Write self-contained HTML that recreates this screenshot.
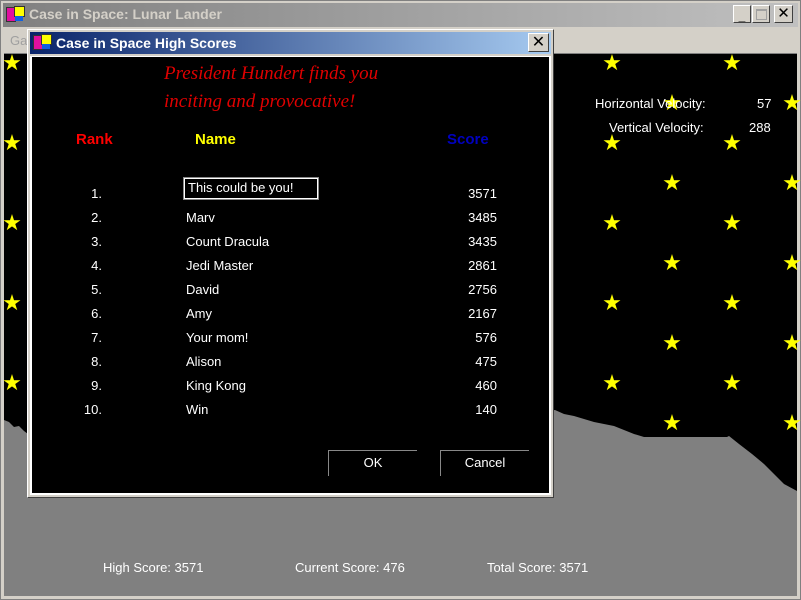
<!DOCTYPE html>
<html><head><style>
body{margin:0;width:801px;height:600px;overflow:hidden;background:#d4d0c8;font-family:"Liberation Sans",sans-serif;position:relative}
.a{position:absolute}
.s{position:absolute;color:#ffff00;font-size:22px;line-height:22px;width:22px;text-align:center}
.t{color:#fff;font-size:13px;position:absolute}
</style></head><body>
<div class="a" style="left:0;top:0;width:801px;height:600px;border:1px solid #808080;box-sizing:border-box;background:#d4d0c8"></div>
<div class="a" style="left:3px;top:3px;width:795px;height:24px;background:linear-gradient(90deg,#808080,#c0c0c0)"></div>
<div class="a" style="left:6px;top:7px;width:8px;height:13px;background:#e0109f;border:1px solid #333"></div>
<div class="a" style="left:14px;top:6px;width:9px;height:9px;background:#ffff00;border:1px solid #333"></div>
<div class="a" style="left:15px;top:16px;width:8px;height:5px;background:#1060e0"></div>
<div class="a" style="left:29px;top:6px;color:#d4d0c8;font-weight:bold;font-size:14px">Case in Space: Lunar Lander</div>
<div class="a" style="left:733px;top:5px;width:18px;height:18px;background:#d4d0c8;border:1px solid #fff;border-right-color:#404040;border-bottom-color:#404040;box-sizing:border-box;font-size:12px;text-align:center;font-weight:bold;line-height:20px">_</div>
<div class="a" style="left:752px;top:5px;width:18px;height:18px;background:#d4d0c8;border:1px solid #fff;border-right-color:#404040;border-bottom-color:#404040;box-sizing:border-box"><div style="margin:3px;width:9px;height:8px;border:1px solid #a0a0a0;border-top-width:2px"></div></div>
<div class="a" style="left:774px;top:5px;width:19px;height:18px;background:#d4d0c8;border:1px solid #fff;border-right-color:#404040;border-bottom-color:#404040;box-sizing:border-box;font-size:15px;text-align:center;line-height:16px">✕</div>
<div class="a" style="left:10px;top:33px;color:#a0a0a0;font-size:13px">Ga</div>
<div class="a" style="left:4px;top:53px;width:793px;height:542px;background:#000;border-top:1px solid #808080;overflow:hidden">
<svg class="a" style="left:0;top:0" width="793" height="542"><polygon fill="#808080" points="0,366 5,368 10,373 15,372 20,377 24,380 300,370 551,356 560,360 570,362 590,368 610,372 630,380 640,383 723,383 725,382 735,390 748,400 760,410 770,420 780,430 793,437 793,542 0,542"/></svg>
</div>
<div id="stars"></div>
<div class="t" style="left:595px;top:96px">Horizontal Velocity:</div>
<div class="t" style="left:757px;top:96px">57</div>
<div class="t" style="left:609px;top:120px">Vertical Velocity:</div>
<div class="t" style="left:749px;top:120px">288</div>
<div class="t" style="left:103px;top:560px">High Score: 3571</div>
<div class="t" style="left:295px;top:560px">Current Score: 476</div>
<div class="t" style="left:487px;top:560px">Total Score: 3571</div>
<div class="a" style="left:27px;top:29px;width:527px;height:469px;background:#d4d0c8;border:1px solid #fff;border-right-color:#404040;border-bottom-color:#404040;box-sizing:border-box"></div>
<div class="a" style="left:30px;top:32px;width:521px;height:22px;background:linear-gradient(90deg,#0a246a,#a6caf0)"></div>
<div class="a" style="left:33px;top:35px;width:8px;height:13px;background:#e0109f;border:1px solid #333"></div>
<div class="a" style="left:41px;top:34px;width:9px;height:9px;background:#ffff00;border:1px solid #333"></div>
<div class="a" style="left:42px;top:44px;width:8px;height:5px;background:#1060e0"></div>
<div class="a" style="left:56px;top:35px;color:#fff;font-weight:bold;font-size:14px">Case in Space High Scores</div>
<div class="a" style="left:528px;top:33px;width:21px;height:19px;background:#d4d0c8;border:1px solid #fff;border-right-color:#404040;border-bottom-color:#404040;box-sizing:border-box;font-size:16px;text-align:center;line-height:17px">✕</div>
<div class="a" style="left:30px;top:56px;width:521px;height:439px;background:#fff"></div>
<div class="a" style="left:32px;top:57px;width:517px;height:436px;background:#000">
<div class="a" style="left:132px;top:3px;color:#e00000;font-family:'Liberation Serif',serif;font-style:italic;font-size:19px;line-height:28px">President Hundert finds you<br>inciting and provocative!</div>
<div class="a" style="left:44px;top:74px;color:#ff0000;font-weight:bold;font-size:15px">Rank</div>
<div class="a" style="left:163px;top:74px;color:#ffff00;font-weight:bold;font-size:15px">Name</div>
<div class="a" style="left:415px;top:74px;color:#0000c0;font-weight:bold;font-size:15px">Score</div>
<div class="a" style="left:152px;top:121px;width:134px;height:21px;border:1px solid #fff;box-sizing:border-box;outline:1px solid #888"></div>
<div id="rows"></div>
<div class="a" style="left:296px;top:393px;width:88px;height:25px;border-top:1px solid #888;border-left:1px solid #888;color:#fff;font-size:13px;text-align:center;line-height:24px">OK</div>
<div class="a" style="left:408px;top:393px;width:88px;height:25px;border-top:1px solid #888;border-left:1px solid #888;color:#fff;font-size:13px;text-align:center;line-height:24px">Cancel</div>
</div>
<script>
var st='';
for(var r=0;r<10;r++){var y=63+r*40;var x0=(r%2==0)?12:72;for(var x=x0;x<801;x+=120){
if(x>20&&x<560&&y<500)continue;
if(y>415&&x<560) continue;
st+='<div class="s" style="left:'+(x-11)+'px;top:'+(y-11)+'px">★</div>';}}
document.getElementById('stars').innerHTML=st;
var d=[['This could be you!',3571],['Marv',3485],['Count Dracula',3435],['Jedi Master',2861],['David',2756],['Amy',2167],['Your mom!',576],['Alison',475],['King Kong',460],['Win',140]];
var h='';
for(var i=0;i<10;i++){var y=129+i*24;
h+='<div class="t" style="left:30px;width:40px;text-align:right;top:'+y+'px">'+(i+1)+'.</div>';
h+='<div class="t" style="left:'+(i==0?156:154)+'px;top:'+(i==0?y-6:y)+'px">'+d[i][0]+'</div>';
h+='<div class="t" style="left:420px;width:45px;text-align:right;top:'+y+'px">'+d[i][1]+'</div>';}
document.getElementById('rows').innerHTML=h;
</script>
</body></html>
